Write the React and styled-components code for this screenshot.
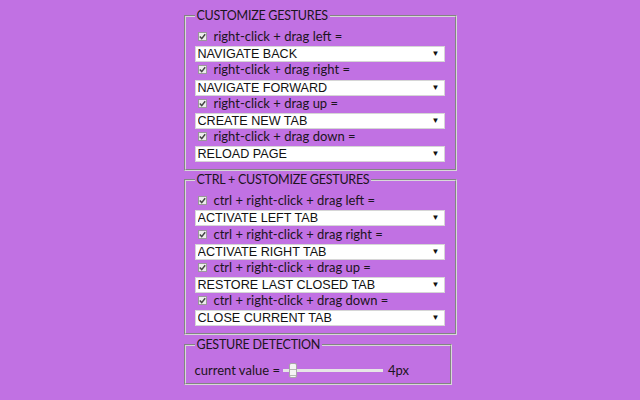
import { useState } from "react";
import styled, { createGlobalStyle } from "styled-components";

const GlobalStyle = createGlobalStyle`
  html, body {
    margin: 0;
    padding: 0;
    background: #c171e3;
  }
  body {
    font-family: Lato, "Noto Sans", sans-serif;
    font-size: 13px;
    color: #1c1420;
  }
`;

const Page = styled.div`
  width: 273px;
  margin: 0 auto;
  padding-top: 7px;
  display: flex;
  flex-direction: column;
  align-items: flex-start;
`;

const Group = styled.fieldset`
  box-sizing: border-box;
  width: ${props => props.width || 273}px;
  margin: ${props => props.top || 0}px 0 0 0;
  padding: ${props => props.pad || "4px 10px 8px 9px"};
  border: 2px groove #d8d8d8;
  min-width: 0;
`;

const Legend = styled.legend`
  padding: 0 2px;
  line-height: 17px;
  font-size: 12.5px;
  letter-spacing: -0.25px;
  text-transform: uppercase;
`;

const CheckRow = styled.label`
  display: flex;
  align-items: center;
  height: 17.3px;
  line-height: 17px;
  padding-left: 3px;
`;

const CheckBox = styled.span`
  box-sizing: border-box;
  width: 9px;
  height: 9px;
  margin-right: 7px;
  border: 1px solid #9a9a9a;
  background: #ededed;
  display: flex;
  align-items: center;
  justify-content: center;
`;

const SelectWrap = styled.div`
  position: relative;
  width: 250px;
  height: 16px;
`;

const Select = styled.select`
  appearance: none;
  box-sizing: border-box;
  width: 100%;
  height: 16px;
  margin: 0;
  padding: 0 0 0 2px;
  border: 1px solid #d6d6d6;
  border-radius: 0;
  background: #fff;
  color: #111;
  font-family: "Liberation Sans", Arial, sans-serif;
  font-size: 12.6px;
  line-height: 14px;
  outline: none;
`;

const Arrow = styled.span`
  position: absolute;
  right: 5px;
  top: 0;
  line-height: 16px;
  font-size: 8px;
  color: #111;
  pointer-events: none;
`;

const SliderRow = styled.div`
  display: flex;
  align-items: center;
  height: 18px;
  margin-top: 8px;
`;

const Range = styled.input`
  appearance: none;
  width: 100px;
  height: 18px;
  margin: 0 5px 0 3px;
  background: transparent;

  &::-webkit-slider-runnable-track {
    height: 3px;
    background: #e6e6e6;
  }
  &::-webkit-slider-thumb {
    appearance: none;
    box-sizing: border-box;
    width: 8px;
    height: 15px;
    margin-top: -6px;
    border: 1px solid #a8a8a8;
    border-radius: 2px;
    background: repeating-linear-gradient(
      to bottom,
      #f4f4f4 0,
      #f4f4f4 5px,
      #b8b8b8 5px,
      #b8b8b8 6px
    );
  }
`;

const Check = () => (
  <CheckBox>
    <svg width="7" height="7" viewBox="0 0 7 7">
      <path d="M0.8 3.6 L2.7 5.6 L6.2 1.2" fill="none" stroke="#444" strokeWidth="1.5" />
    </svg>
  </CheckBox>
);

const ACTIONS = [
  "NAVIGATE BACK",
  "NAVIGATE FORWARD",
  "CREATE NEW TAB",
  "RELOAD PAGE",
  "ACTIVATE LEFT TAB",
  "ACTIVATE RIGHT TAB",
  "RESTORE LAST CLOSED TAB",
  "CLOSE CURRENT TAB",
];

const plain = [
  { label: "right-click + drag left =", value: "NAVIGATE BACK" },
  { label: "right-click + drag right =", value: "NAVIGATE FORWARD" },
  { label: "right-click + drag up =", value: "CREATE NEW TAB" },
  { label: "right-click + drag down =", value: "RELOAD PAGE" },
];

const ctrl = [
  { label: "ctrl + right-click + drag left =", value: "ACTIVATE LEFT TAB" },
  { label: "ctrl + right-click + drag right =", value: "ACTIVATE RIGHT TAB" },
  { label: "ctrl + right-click + drag up =", value: "RESTORE LAST CLOSED TAB" },
  { label: "ctrl + right-click + drag down =", value: "CLOSE CURRENT TAB" },
];

function Gesture({ label, value }) {
  const [action, setAction] = useState(value);
  return (
    <div>
      <CheckRow>
        <Check />
        {label}
      </CheckRow>
      <SelectWrap>
        <Select value={action} onChange={e => setAction(e.target.value)}>
          {ACTIONS.map(a => (
            <option key={a} value={a}>{a}</option>
          ))}
        </Select>
        <Arrow>▼</Arrow>
      </SelectWrap>
    </div>
  );
}

export default function App() {
  const [distance, setDistance] = useState(4);
  return (
    <>
      <GlobalStyle />
      <Page>
        <Group>
          <Legend>Customize Gestures</Legend>
          {plain.map(g => <Gesture key={g.label} {...g} />)}
        </Group>
        <Group>
          <Legend>Ctrl + Customize Gestures</Legend>
          {ctrl.map(g => <Gesture key={g.label} {...g} />)}
        </Group>
        <Group width={268} top={1} pad="0 10px 4px 9px">
          <Legend>Gesture Detection</Legend>
          <SliderRow>
            current value =
            <Range
              type="range"
              min="1"
              max="50"
              value={distance}
              onChange={e => setDistance(Number(e.target.value))}
            />
            {distance}px
          </SliderRow>
        </Group>
      </Page>
    </>
  );
}
